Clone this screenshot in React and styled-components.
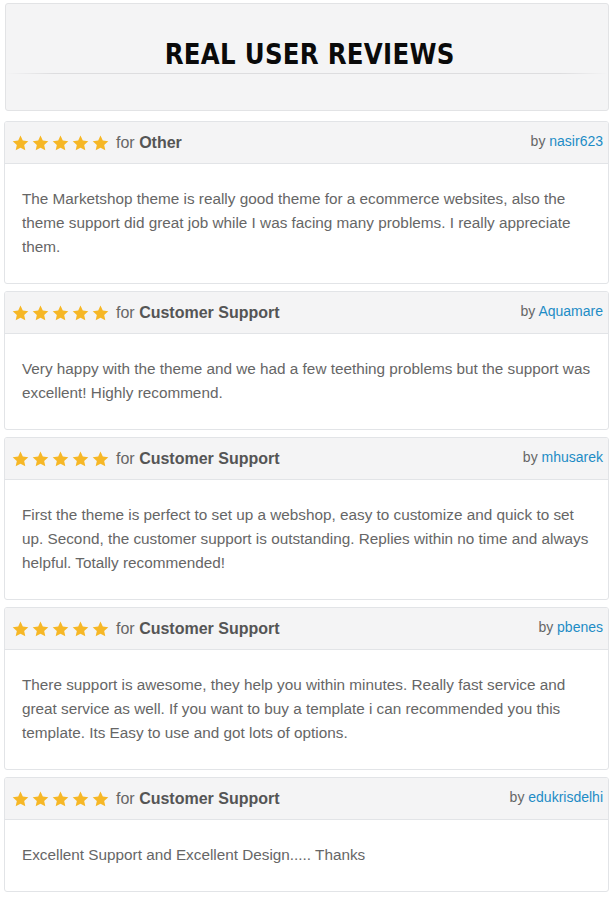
import React from 'react';
import styled, { createGlobalStyle } from 'styled-components';

const reviews = [
  {
    topic: 'Other',
    author: 'nasir623',
    text: 'The Marketshop theme is really good theme for a ecommerce websites, also the theme support did great job while I was facing many problems. I really appreciate them.',
  },
  {
    topic: 'Customer Support',
    author: 'Aquamare',
    text: 'Very happy with the theme and we had a few teething problems but the support was excellent! Highly recommend.',
  },
  {
    topic: 'Customer Support',
    author: 'mhusarek',
    text: 'First the theme is perfect to set up a webshop, easy to customize and quick to set up. Second, the customer support is outstanding. Replies within no time and always helpful. Totally recommended!',
  },
  {
    topic: 'Customer Support',
    author: 'pbenes',
    text: 'There support is awesome, they help you within minutes. Really fast service and great service as well. If you want to buy a template i can recommended you this template. Its Easy to use and got lots of options.',
  },
  {
    topic: 'Customer Support',
    author: 'edukrisdelhi',
    text: 'Excellent Support and Excellent Design..... Thanks',
  },
];

function Star() {
  return (
    <svg width="17" height="16" viewBox="0 0 24 23">
      <path
        d="M12 0.8l3.3 7.2 7.9 0.9-5.9 5.4 1.6 7.8L12 18.2l-6.9 3.9 1.6-7.8L0.8 8.9l7.9-0.9z"
        fill="#f6b726"
      />
    </svg>
  );
}

export default function App() {
  return (
    <>
      <GlobalStyle />
      <Page>
        <TitleBox>
          <Title>REAL USER REVIEWS</Title>
          <Rule />
        </TitleBox>
        {reviews.map((r) => (
          <Card key={r.author}>
            <CardHead>
              <Stars>
                {[0, 1, 2, 3, 4].map((i) => (
                  <Star key={i} />
                ))}
              </Stars>
              <Topic>
                for <b>{r.topic}</b>
              </Topic>
              <Author>
                by <a href="#">{r.author}</a>
              </Author>
            </CardHead>
            <CardBody>{r.text}</CardBody>
          </Card>
        ))}
      </Page>
    </>
  );
}

const GlobalStyle = createGlobalStyle`
  body {
    margin: 0;
    background: #fff;
    font-family: "Liberation Sans", Arial, sans-serif;
  }
`;

const Page = styled.div`
  width: 614px;
  padding: 3px 0 6px;
  box-sizing: border-box;
`;

const TitleBox = styled.div`
  margin: 0 5px 10px 5px;
  height: 108px;
  box-sizing: border-box;
  background: #f4f4f5;
  border: 1px solid #e2e3e5;
  border-radius: 3px;
  display: flex;
  flex-direction: column;
  align-items: center;
  padding-top: 33px;
`;

const Title = styled.h1`
  margin: 0 0 0 6px;
  font-family: "DejaVu Sans", sans-serif;
  font-weight: bold;
  font-size: 28px;
  line-height: 36px;
  letter-spacing: 0.3px;
  color: #0a0a0a;
  transform: scaleX(0.875);
`;

const Rule = styled.div`
  align-self: stretch;
  height: 1px;
  margin-top: 0;
  background: linear-gradient(to right, #f4f4f5 0%, #dddddf 8%, #dddddf 92%, #f4f4f5 100%);
`;

const Card = styled.div`
  margin: 0 5px 7px 4px;
  border: 1px solid #e2e4e7;
  border-radius: 3px;
  overflow: hidden;
  background: #fff;
`;

const CardHead = styled.div`
  height: 41px;
  display: flex;
  align-items: center;
  padding: 0 5px 0 7px;
  background: #f4f4f5;
  border-bottom: 1px solid #e2e4e7;
`;

const Stars = styled.div`
  display: flex;
  gap: 3px;
  margin-right: 7px;
  padding-top: 1px;
`;

const Topic = styled.span`
  font-size: 16px;
  color: #666;
  flex: 1;
  padding-top: 1px;
  b {
    color: #555;
  }
`;

const Author = styled.span`
  font-size: 14px;
  color: #666;
  align-self: flex-start;
  margin-top: 11px;
  a {
    color: #1d8cc6;
    text-decoration: none;
  }
`;

const CardBody = styled.div`
  padding: 23px 12px 24px 17px;
  font-size: 15.3px;
  line-height: 24px;
  color: #666;
`;
